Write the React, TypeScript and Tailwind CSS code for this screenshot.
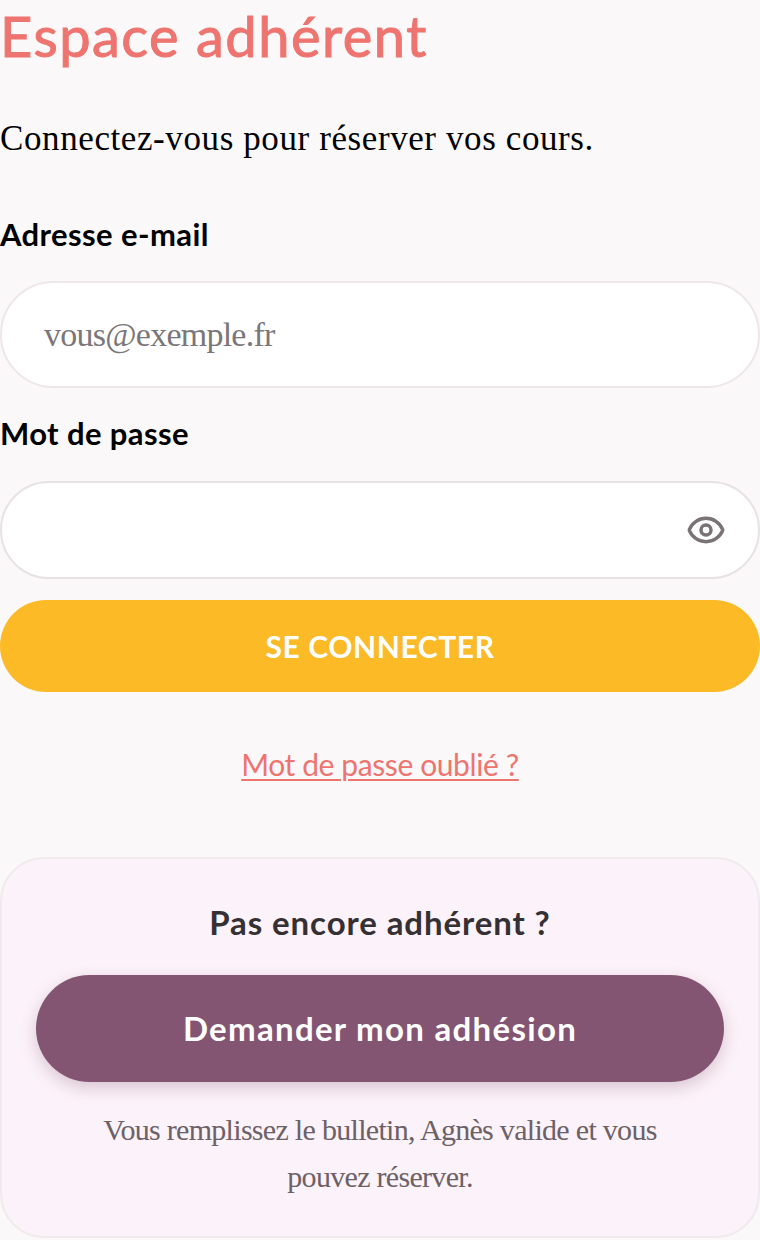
import { Eye } from "lucide-react";

const sans = "font-['Lato','Noto_Sans',sans-serif]";
const serif = "font-['Liberation_Serif','Times_New_Roman',serif]";

export default function App() {
  return (
    <div className="w-[760px] h-[1240px] overflow-hidden bg-[#faf8f9] flex flex-col">
      <h1 className={`${sans} h-[72px] text-[56px] leading-[72px] font-normal text-[#ee7470] tracking-[1.5px] [-webkit-text-stroke:1px_#ee7470]`}>
        Espace adhérent
      </h1>
      <p className={`${serif} mt-[47px] h-[40px] text-[35px] leading-[40px] text-black tracking-[0.6px]`}>
        Connectez-vous pour réserver vos cours.
      </p>
      <label className={`${sans} mt-[55px] h-[40px] text-[31px] leading-[40px] font-bold text-black tracking-[0.4px]`}>
        Adresse e-mail
      </label>
      <div className="mt-[27px] h-[107px] rounded-full border-2 border-[#eee6ea] bg-white flex items-center pl-[42px]">
        <span className={`${serif} text-[34px] leading-[40px] text-[#7b7679] tracking-[-0.75px]`}>vous@exemple.fr</span>
      </div>
      <label className={`${sans} mt-[25px] h-[40px] text-[31px] leading-[40px] font-bold text-black tracking-[0.4px]`}>
        Mot de passe
      </label>
      <div className="mt-[28px] h-[98px] rounded-full border-2 border-[#e8e2e5] bg-white flex items-center justify-end pr-[32px]">
        <Eye size={40} strokeWidth={2.1} className="text-[#7a7275]" />
      </div>
      <div className={`${sans} mt-[21px] h-[92px] rounded-full bg-[#fbba26] flex items-center justify-center text-[30px] font-bold text-white tracking-[0.6px]`}>
        SE CONNECTER
      </div>
      <a className={`${sans} mt-[52px] h-[40px] text-center text-[30px] leading-[40px] text-[#ee7470] tracking-[-0.4px] underline underline-offset-[3px] decoration-2`}>
        Mot de passe oublié ?
      </a>
      <div className="mt-[73px] h-[381px] rounded-[44px] border-2 border-[#f0e9ed] bg-[#fcf2f9] flex flex-col items-center px-[34px]">
        <h2 className={`${sans} mt-[43px] h-[40px] text-[33px] leading-[40px] font-bold text-[#353033] tracking-[0.9px]`}>
          Pas encore adhérent ?
        </h2>
        <div className={`${sans} mt-[33px] h-[107px] w-full rounded-full bg-[#835573] shadow-[0_6px_16px_rgba(131,85,115,0.28)] flex items-center justify-center text-[33px] font-bold text-white tracking-[1.3px]`}>
          Demander mon adhésion
        </div>
        <p className={`${serif} mt-[24px] w-[600px] text-center text-[30px] leading-[47px] text-[#6b6166] tracking-[-0.7px]`}>
          Vous remplissez le bulletin, Agnès valide et vous pouvez réserver.
        </p>
      </div>
    </div>
  );
}
